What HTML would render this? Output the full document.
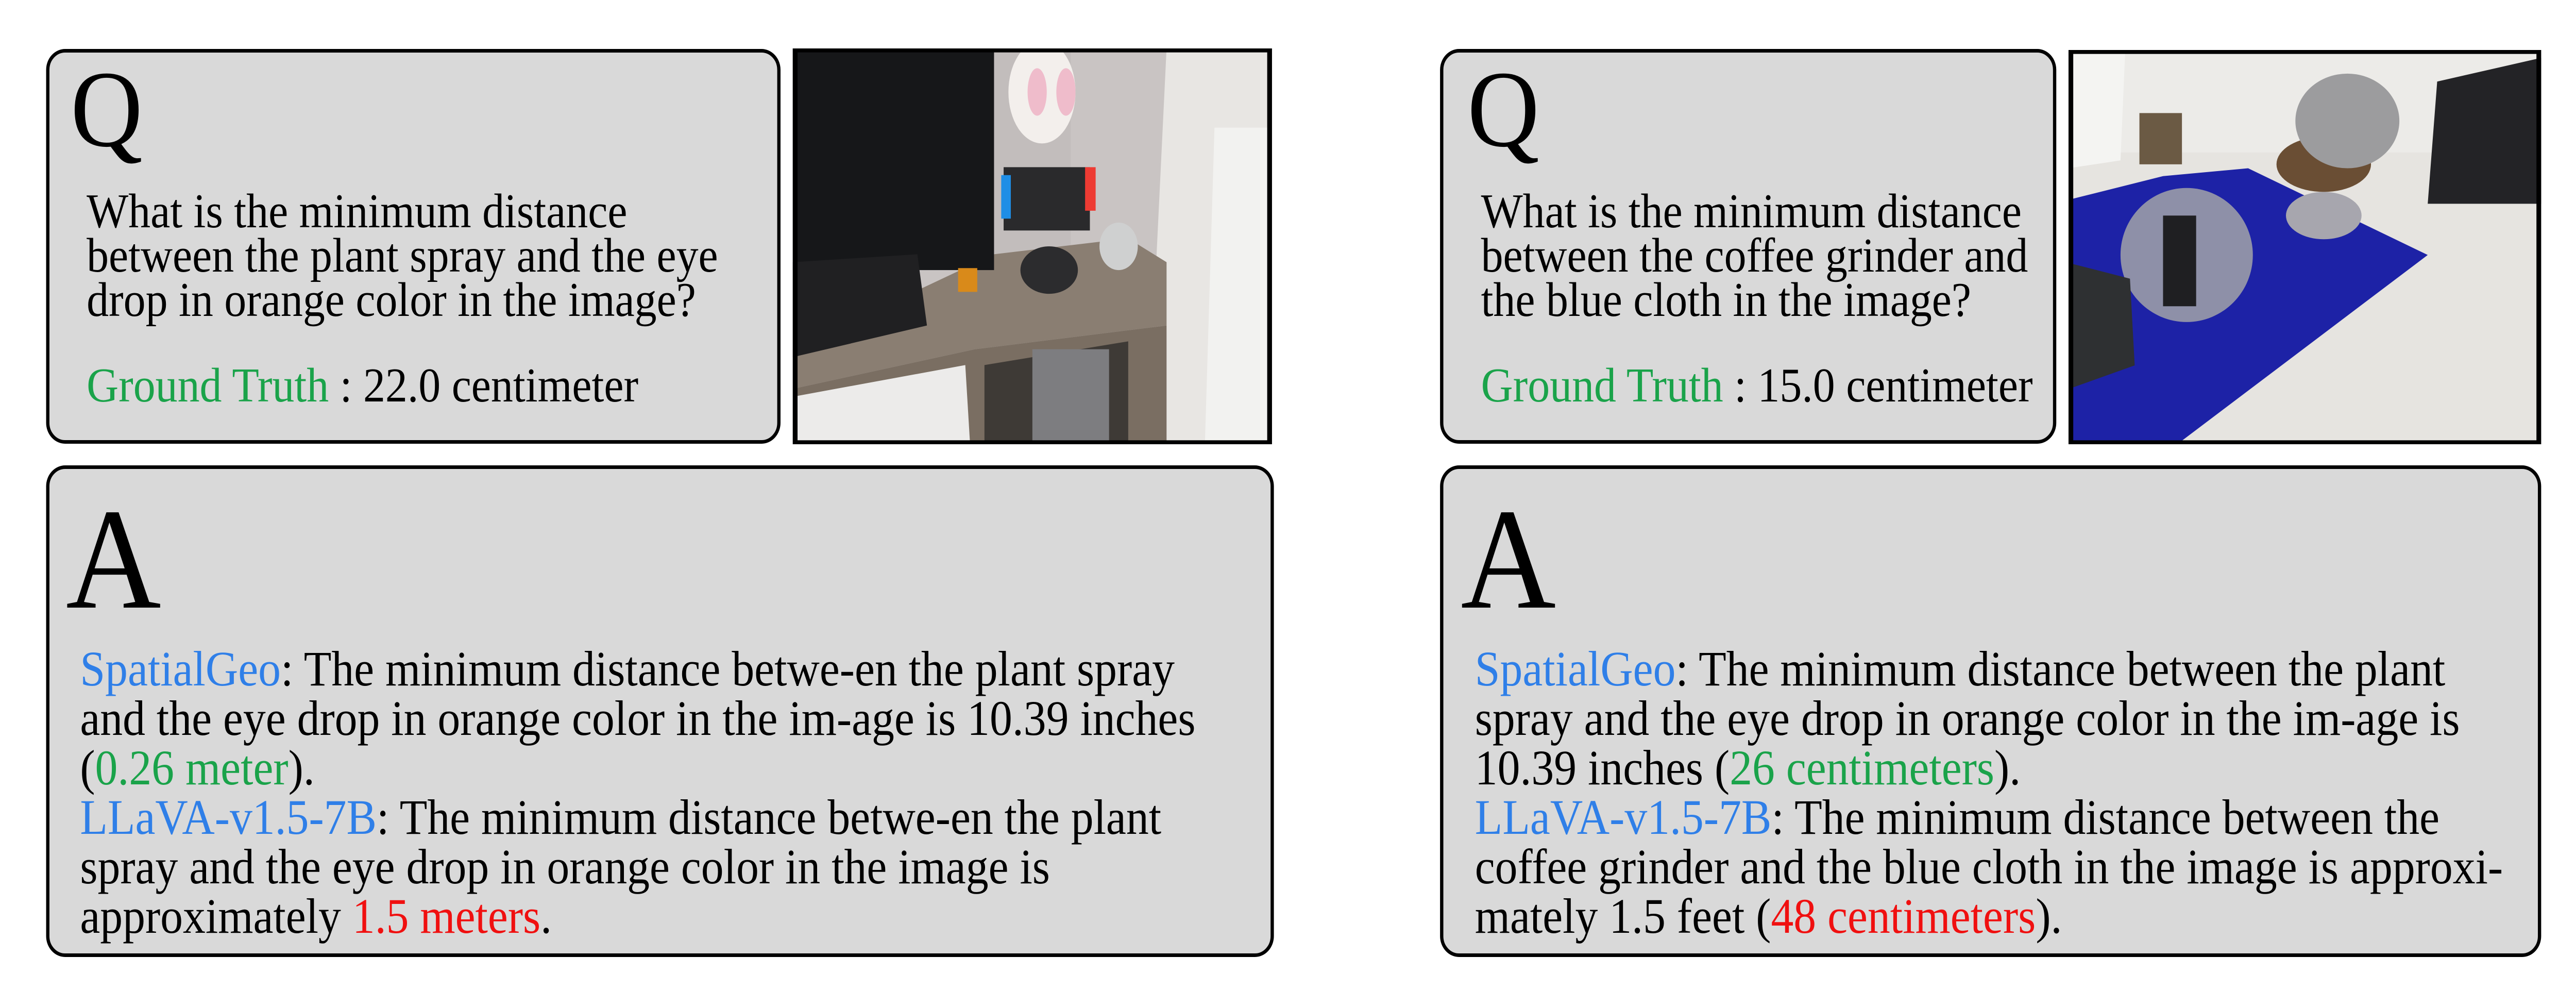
<!DOCTYPE html>
<html><head><meta charset="utf-8"><style>
html,body{margin:0;padding:0;background:#fff;overflow:hidden;width:100%;height:100%;}
svg.page{position:fixed;left:0;top:0;width:100vw;height:100vh;display:block;}
text{font-family:"Liberation Serif","Times New Roman",serif;fill:#000;}
.q{font-size:94px;}
.a{font-size:96px;}
.g{fill:#1aa34a;}
.b{fill:#2f7fe8;}
.r{fill:#f01010;}
</style></head><body>
<svg class="page" viewBox="0 0 5472 1954" preserveAspectRatio="none" xmlns="http://www.w3.org/2000/svg">
<rect width="5472" height="1954" fill="#fff"/>

<!-- Left Q -->
<rect x="101.5" y="98.5" width="1553" height="759" rx="37" fill="#d9d9d9" stroke="#000" stroke-width="7"/>
<text x="150" y="283" font-size="212">Q</text>
<text class="q" x="184" y="441">What is the minimum distance</text>
<text class="q" x="184" y="527">between the plant spray and the eye</text>
<text class="q" x="184" y="613">drop in orange color in the image?</text>
<text class="q" x="184" y="779"><tspan class="g">Ground Truth</tspan> : 22.0 centimeter</text>

<!-- Left photo -->
<svg x="1684" y="94" width="1018" height="768" viewBox="0 0 1000 1000" preserveAspectRatio="none">
<rect width="1000" height="1000" fill="#c9c4c3"/>
<rect x="420" y="0" width="160" height="600" fill="#c2bdbc"/>
<polygon points="780,0 1000,0 1000,1000 740,1000 760,500" fill="#e8e6e3"/>
<polygon points="880,200 1000,200 1000,1000 860,1000" fill="#f2f2f0"/>
<polygon points="0,760 420,520 700,480 780,540 780,700 380,760 0,860" fill="#8a7e72"/>
<polygon points="0,860 380,760 780,700 780,1000 0,1000" fill="#7a6e62"/>
<polygon points="0,880 360,800 370,1000 0,1000" fill="#ecebea"/>
<polygon points="400,800 700,740 700,1000 400,1000" fill="#3e3a36"/>
<rect x="500" y="760" width="160" height="240" fill="#7d7d80"/>
<rect x="0" y="0" width="420" height="560" fill="#161719"/>
<polygon points="0,540 260,520 280,700 0,780" fill="#202022"/>
<rect x="440" y="300" width="180" height="160" fill="#2a2a2c"/>
<rect x="435" y="320" width="20" height="110" fill="#1f8ee6"/>
<rect x="610" y="300" width="22" height="110" fill="#ee3b33"/>
<ellipse cx="520" cy="110" rx="70" ry="130" fill="#f3efec"/>
<ellipse cx="510" cy="110" rx="20" ry="60" fill="#efbccb"/>
<ellipse cx="570" cy="110" rx="20" ry="60" fill="#efbccb"/>
<ellipse cx="535" cy="560" rx="60" ry="60" fill="#2c2c2e"/>
<ellipse cx="680" cy="500" rx="40" ry="60" fill="#cfd0d0"/>
<rect x="345" y="555" width="40" height="60" fill="#d98a1a"/>
<rect x="4.5" y="4.5" width="991" height="991" fill="none" stroke="#000" stroke-width="11"/>
</svg>

<!-- Left A -->
<rect x="101.5" y="906.5" width="2601" height="947" rx="37" fill="#d9d9d9" stroke="#000" stroke-width="7"/>
<text x="140" y="1179" font-size="280">A</text>
<text class="a" x="170" y="1330"><tspan class="b">SpatialGeo</tspan>: The minimum distance betwe-en the plant spray</text>
<text class="a" x="170" y="1426">and the eye drop in orange color in the im-age is 10.39 inches</text>
<text class="a" x="170" y="1522">(<tspan class="g">0.26 meter</tspan>).</text>
<text class="a" x="170" y="1618"><tspan class="b">LLaVA-v1.5-7B</tspan>: The minimum distance betwe-en the plant</text>
<text class="a" x="170" y="1714">spray and the eye drop in orange color in the image is</text>
<text class="a" x="170" y="1810">approximately <tspan class="r">1.5 meters</tspan>.</text>

<!-- Right Q -->
<rect x="3062.5" y="98.5" width="1302" height="759" rx="37" fill="#d9d9d9" stroke="#000" stroke-width="7"/>
<text x="3117" y="283" font-size="212">Q</text>
<text class="q" x="3146" y="441">What is the minimum distance</text>
<text class="q" x="3146" y="527">between the coffee grinder and</text>
<text class="q" x="3146" y="613">the blue cloth in the image?</text>
<text class="q" x="3146" y="779"><tspan class="g">Ground Truth</tspan> : 15.0 centimeter</text>

<!-- Right photo -->
<svg x="4394" y="97" width="1004" height="765" viewBox="0 0 1000 1000" preserveAspectRatio="none">
<rect width="1000" height="1000" fill="#e6e4e0"/>
<rect x="0" y="0" width="1000" height="260" fill="#ecebe8"/>
<polygon points="0,0 120,0 110,280 0,300" fill="#f4f4f2"/>
<polygon points="0,380 200,320 380,300 760,520 230,1000 0,1000" fill="#1d22a6"/>
<ellipse cx="250" cy="520" rx="140" ry="170" fill="#8e90a8"/>
<rect x="200" y="420" width="70" height="230" fill="#1f1f22"/>
<ellipse cx="540" cy="290" rx="100" ry="70" fill="#6a4e34"/>
<ellipse cx="540" cy="420" rx="80" ry="60" fill="#a7a6ae"/>
<ellipse cx="590" cy="180" rx="110" ry="120" fill="#9c9c9e"/>
<polygon points="780,80 1000,20 1000,390 760,390" fill="#232326"/>
<rect x="150" y="160" width="90" height="130" fill="#6b5a44"/>
<polygon points="0,540 130,580 140,800 0,860" fill="#2e3032"/>
<rect x="4.5" y="4.5" width="991" height="991" fill="none" stroke="#000" stroke-width="11"/>
</svg>

<!-- Right A -->
<rect x="3062.5" y="906.5" width="2332" height="947" rx="37" fill="#d9d9d9" stroke="#000" stroke-width="7"/>
<text x="3103" y="1179" font-size="280">A</text>
<text class="a" x="3133" y="1330"><tspan class="b">SpatialGeo</tspan>: The minimum distance between the plant</text>
<text class="a" x="3133" y="1426">spray and the eye drop in orange color in the im-age is</text>
<text class="a" x="3133" y="1522">10.39 inches (<tspan class="g">26 centimeters</tspan>).</text>
<text class="a" x="3133" y="1618"><tspan class="b">LLaVA-v1.5-7B</tspan>: The minimum distance between the</text>
<text class="a" x="3133" y="1714">coffee grinder and the blue cloth in the image is approxi-</text>
<text class="a" x="3133" y="1810">mately 1.5 feet (<tspan class="r">48 centimeters</tspan>).</text>
</svg>
</body></html>
